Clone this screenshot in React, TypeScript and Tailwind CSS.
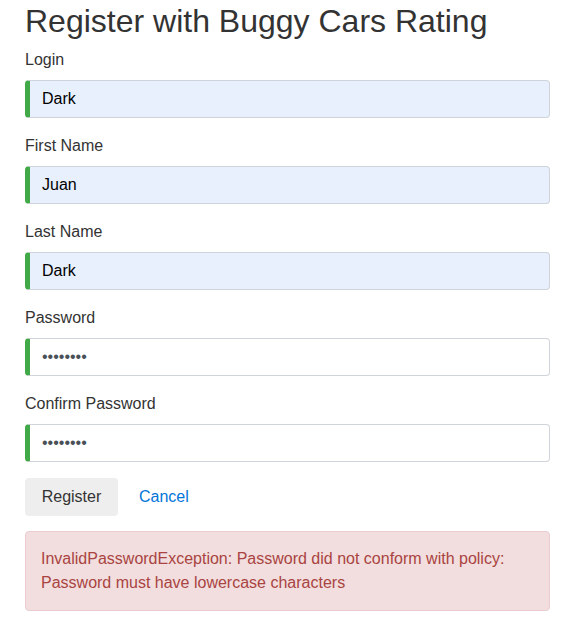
export default function App() {
  const fields = [
    { label: "Login", value: "Dark", type: "text", filled: true },
    { label: "First Name", value: "Juan", type: "text", filled: true },
    { label: "Last Name", value: "Dark", type: "text", filled: true },
    { label: "Password", value: "password", type: "password", filled: false },
    { label: "Confirm Password", value: "password", type: "password", filled: false },
  ];

  return (
    <div className="min-h-screen bg-white px-[25px] pt-[2px] text-[#333] [font-family:'Liberation_Sans',Arial,sans-serif]">
      <div className="w-[525px]">
        <h1 className="mb-2 text-[32px] leading-[38.4px] font-normal">
          Register with Buggy Cars Rating
        </h1>
        <form onSubmit={(e) => e.preventDefault()}>
          {fields.map((f) => (
            <div key={f.label} className="mb-4">
              <label className="mb-2 block text-base leading-6">{f.label}</label>
              <input
                type={f.type}
                defaultValue={f.value}
                className={`block h-[38px] w-full rounded border border-l-[5px] border-[#ced4da] border-l-[#42a948] px-3 text-base outline-none ${
                  f.filled ? "bg-[#e8f0fe] text-black" : "bg-white text-[#495057]"
                }`}
              />
            </div>
          ))}
          <div className="flex items-center">
            <button
              type="submit"
              className="h-[38px] w-[93px] rounded bg-[#eee] text-base text-[#333]"
            >
              Register
            </button>
            <a href="#" className="ml-[21px] text-base text-[#0275d8]">
              Cancel
            </a>
          </div>
          <div className="mt-[15px] rounded border border-[#ebccd1] bg-[#f2dede] p-[15px] text-base leading-6 text-[#a94442]">
            InvalidPasswordException: Password did not conform with policy: Password must have
            lowercase characters
          </div>
        </form>
      </div>
    </div>
  );
}
